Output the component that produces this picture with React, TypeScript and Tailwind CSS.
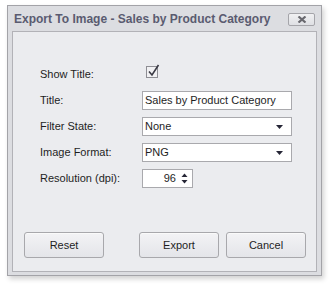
import React from "react";

const font = { fontFamily: '"Liberation Sans", Arial, sans-serif' };

function Arrow() {
  return (
    <svg width="7" height="4" viewBox="0 0 7 4" className="block">
      <path d="M0 0 H7 L3.5 4 Z" fill="#262636" />
    </svg>
  );
}

function Select({ value }: { value: string }) {
  return (
    <div className="w-[150px] h-[19px] bg-white border border-[#a9a9ad] flex items-center justify-between pl-[2px] pr-[8px] text-[11px] text-[#1e1e1e]">
      <span>{value}</span>
      <Arrow />
    </div>
  );
}

function Button({ label }: { label: string }) {
  return (
    <div className="w-[80px] h-[26px] rounded-[3px] border border-[#a8a8ac] bg-gradient-to-b from-[#f3f3f5] to-[#e4e5e9] flex items-center justify-center text-[11px] text-[#1e1e1e] shadow-[inset_0_1px_0_#fafafa]">
      {label}
    </div>
  );
}

export default function App() {
  return (
    <div className="w-[335px] h-[290px] bg-white pt-[5px] pl-[7px]" style={font}>
      <div className="w-[315px] h-[271px] border border-[#a3a3a8] bg-[#dcdde1] flex flex-col shadow-[2px_3px_5px_rgba(0,0,0,0.18)]">
        <div className="h-[25px] flex items-center justify-between pl-[6px] pr-[6px]">
          <span className="text-[12px] font-bold text-[#5a5b70] leading-none">
            Export To Image - Sales by Product Category
          </span>
          <div className="w-[27px] h-[13px] mt-[1px] rounded-[2px] border border-[#a5a5aa] bg-gradient-to-b from-[#f0f0f2] to-[#dfe0e4] flex items-center justify-center">
            <svg width="10" height="7" viewBox="0 0 10 7">
              <path d="M1.5 0.5 L8.5 6.5 M8.5 0.5 L1.5 6.5" stroke="#69696f" strokeWidth="2.2" />
            </svg>
          </div>
        </div>
        <div className="flex-1 mx-[4px] mb-[3px] border border-[#b2b2b7] bg-[#ebecef] flex flex-col">
          <div className="pt-[33px] pl-[27px] grid grid-cols-[102px_auto] gap-y-[7px] text-[11px] text-[#1e1e1e]">
            <div className="h-[19px] flex items-center">Show Title:</div>
            <div className="h-[19px] flex items-start pl-[4px]">
              <div className="relative w-[12px] h-[12px] mt-[1px] border border-[#8e8e94] bg-[#f1f1f3]">
                <svg className="absolute -top-[3px] left-[0px]" width="13" height="14" viewBox="0 0 13 14">
                  <path d="M2 7.5 L5 11 L11.5 1" stroke="#3a3a44" strokeWidth="1.6" fill="none" />
                </svg>
              </div>
            </div>

            <div className="h-[19px] flex items-center">Title:</div>
            <div className="w-[150px] h-[19px] bg-white border border-[#a9a9ad] flex items-center pl-[2px]">
              Sales by Product Category
            </div>

            <div className="h-[19px] flex items-center">Filter State:</div>
            <Select value="None" />

            <div className="h-[19px] flex items-center">Image Format:</div>
            <Select value="PNG" />

            <div className="h-[19px] flex items-center">Resolution (dpi):</div>
            <div className="w-[51px] h-[19px] bg-white border border-[#a9a9ad] flex items-center justify-end pr-[4px] gap-[5px]">
              <span>96</span>
              <svg width="7" height="13" viewBox="0 0 7 13" className="block">
                <path d="M0.5 5 L3.5 1.5 L6.5 5 Z" fill="#262636" />
                <path d="M0.5 8 L6.5 8 L3.5 11.5 Z" fill="#262636" />
              </svg>
            </div>
          </div>
          <div className="flex-1" />
          <div className="flex items-center pl-[11px] pr-[10px] pb-[13px]">
            <Button label="Reset" />
            <div className="flex-1" />
            <div className="flex gap-[7px]">
              <Button label="Export" />
              <Button label="Cancel" />
            </div>
          </div>
        </div>
      </div>
    </div>
  );
}
